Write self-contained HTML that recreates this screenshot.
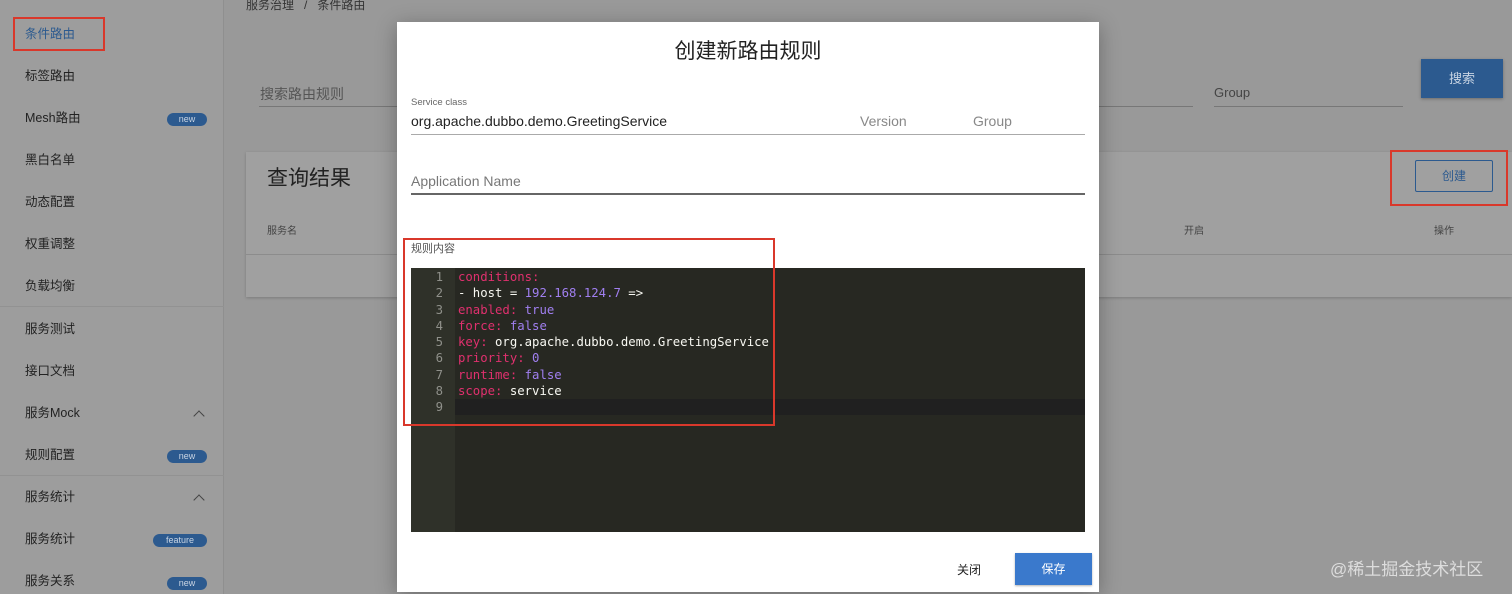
<!DOCTYPE html><html><head><meta charset="utf-8"><style>
*{margin:0;padding:0;box-sizing:border-box}
body{width:1512px;height:594px;overflow:hidden;background:#999;font-family:"Liberation Sans","Noto Sans CJK SC",sans-serif;position:relative;color:#222}
.a{position:absolute}
.side{left:0;top:0;width:224px;height:594px;background:#9d9d9d;border-right:1px solid #8f8f8f}
.si{position:absolute;left:25px;font-size:12.5px;color:#222;margin-top:-2px}
.bd{position:absolute;left:167px;width:40px;height:13px;border-radius:7px;background:#2c5a8f;color:#c8d4e3;font-size:9px;text-align:center;line-height:13px;margin-top:3px}
.chev{position:absolute;left:195px;width:8px;height:8px;border-left:1.5px solid #444;border-top:1.5px solid #444;transform:rotate(45deg);margin-top:3px}
.red{position:absolute;border:2.5px solid #d9382b}
.code{font-family:"DejaVu Sans Mono","Liberation Mono",monospace;font-size:12.3px;line-height:16.3px}
.k{color:#e0306e}.n{color:#a07ff0}.w{color:#f8f8f2}
</style></head><body>
<div class="a side"></div>
<div class="si" style="top:25px;color:#2c5a8f">条件路由</div>
<div class="si" style="top:67px">标签路由</div>
<div class="si" style="top:109px">Mesh路由</div><div class="bd" style="top:110px">new</div>
<div class="si" style="top:151px">黑白名单</div>
<div class="si" style="top:193px">动态配置</div>
<div class="si" style="top:235px">权重调整</div>
<div class="si" style="top:277px">负载均衡</div>
<div class="a" style="left:0;top:306px;width:224px;border-top:1px solid #929292"></div>
<div class="si" style="top:320px">服务测试</div>
<div class="si" style="top:362px">接口文档</div>
<div class="si" style="top:404px">服务Mock</div><div class="chev" style="top:409px"></div>
<div class="si" style="top:446px">规则配置</div><div class="bd" style="top:447px">new</div>
<div class="a" style="left:0;top:475px;width:224px;border-top:1px solid #929292"></div>
<div class="si" style="top:488px">服务统计</div><div class="chev" style="top:493px"></div>
<div class="si" style="top:530px">服务统计</div><div class="bd" style="top:531px;left:153px;width:54px">feature</div>
<div class="si" style="top:572px">服务关系</div><div class="bd" style="top:574px">new</div>
<div class="red" style="left:13px;top:17px;width:92px;height:34px"></div>

<div class="a" style="left:246px;top:-4px;font-size:12px;color:#333">服务治理 &nbsp;&nbsp;/&nbsp;&nbsp; 条件路由</div>
<div class="a" style="left:260px;top:84px;font-size:14px;color:#555">搜索路由规则</div>
<div class="a" style="left:259px;top:106px;width:140px;border-top:1px solid #777"></div>
<div class="a" style="left:1099px;top:106px;width:94px;border-top:1px solid #777"></div>
<div class="a" style="left:1214px;top:85px;font-size:13px;color:#444">Group</div>
<div class="a" style="left:1214px;top:106px;width:189px;border-top:1px solid #777"></div>
<div class="a" style="left:1421px;top:59px;width:82px;height:39px;background:#2c5a8f;color:#c8d4e3;font-size:13px;text-align:center;line-height:39px;box-shadow:0 1px 3px rgba(0,0,0,.3)">搜索</div>
<div class="a" style="left:246px;top:152px;width:1266px;height:145px;background:#a0a0a0;box-shadow:0 1px 3px rgba(0,0,0,.2)"></div>
<div class="a" style="left:267px;top:162px;font-size:21px;color:#222">查询结果</div>
<div class="a" style="left:267px;top:222px;font-size:10px;color:#444">服务名</div>
<div class="a" style="left:1184px;top:222px;font-size:10px;color:#444">开启</div>
<div class="a" style="left:1434px;top:222px;font-size:10px;color:#444">操作</div>
<div class="a" style="left:246px;top:254px;width:1266px;border-top:1px solid #8c8c8c"></div>
<div class="a" style="left:1415px;top:160px;width:78px;height:32px;border:1px solid #2c5a8f;border-radius:2px;color:#2c5a8f;font-size:12px;text-align:center;line-height:30px">创建</div>
<div class="red" style="left:1390px;top:150px;width:118px;height:56px"></div>
<div class="a" style="left:1330px;top:555px;font-size:17px;color:#ddd">@稀土掘金技术社区</div>

<div class="a" style="left:397px;top:22px;width:702px;height:570px;background:#fff;box-shadow:0 4px 20px rgba(0,0,0,.3)"></div>
<div class="a" style="left:397px;top:35px;width:702px;text-align:center;font-size:21px;color:#222">创建新路由规则</div>
<div class="a" style="left:411px;top:97px;font-size:9.5px;color:#666">Service class</div>
<div class="a" style="left:411px;top:113px;font-size:14px;color:#222">org.apache.dubbo.demo.GreetingService</div>
<div class="a" style="left:860px;top:113px;font-size:14px;color:#888">Version</div>
<div class="a" style="left:973px;top:113px;font-size:14px;color:#888">Group</div>
<div class="a" style="left:411px;top:134px;width:674px;border-top:1px solid #aaa"></div>
<div class="a" style="left:411px;top:173px;font-size:14px;color:#777">Application Name</div>
<div class="a" style="left:411px;top:193px;width:674px;border-top:2px solid #666"></div>
<div class="a" style="left:411px;top:240px;font-size:11px;color:#555">规则内容</div>
<div class="a" style="left:411px;top:268px;width:674px;height:264px;background:#272822"></div>
<div class="a" style="left:411px;top:268px;width:44px;height:264px;background:#2f3129"></div>
<div class="a" style="left:455px;top:399px;width:630px;height:16px;background:#202020"></div>
<div class="a code" style="left:411px;top:269px;width:32px;text-align:right;color:#8f908a">1<br>2<br>3<br>4<br>5<br>6<br>7<br>8<br>9</div>
<div class="a code w" style="left:458px;top:269px;white-space:pre"><span class="k">conditions:</span>
- host = <span class="n">192.168.124.7</span> =>
<span class="k">enabled:</span> <span class="n">true</span>
<span class="k">force:</span> <span class="n">false</span>
<span class="k">key:</span> org.apache.dubbo.demo.GreetingService
<span class="k">priority:</span> <span class="n">0</span>
<span class="k">runtime:</span> <span class="n">false</span>
<span class="k">scope:</span> service</div>
<div class="red" style="left:403px;top:238px;width:372px;height:188px"></div>
<div class="a" style="left:957px;top:561px;font-size:12px;color:#222">关闭</div>
<div class="a" style="left:1015px;top:553px;width:77px;height:32px;background:#3a79cc;color:#fff;font-size:12px;text-align:center;line-height:32px;box-shadow:0 1px 2px rgba(0,0,0,.3)">保存</div>
</body></html>
